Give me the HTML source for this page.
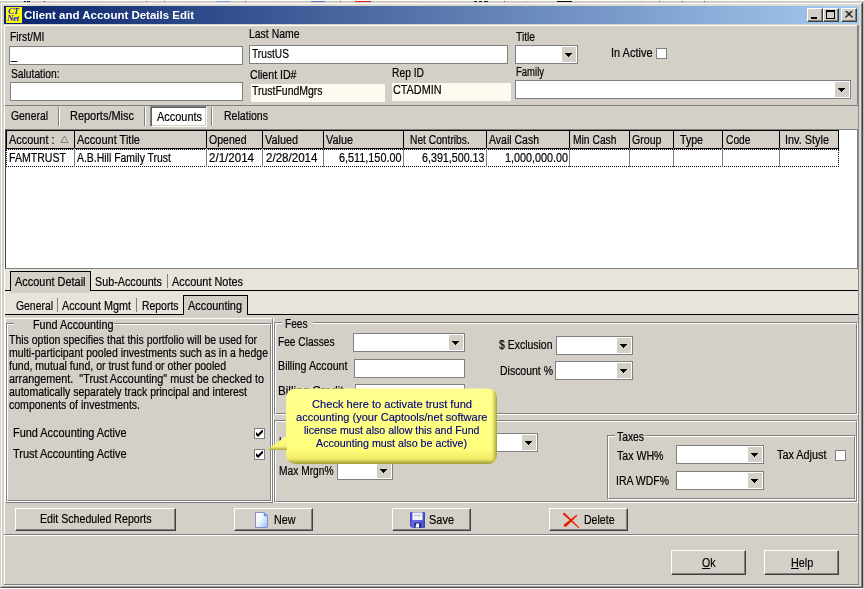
<!DOCTYPE html>
<html><head><meta charset="utf-8"><title>Client and Account Details Edit</title>
<style>
*{box-sizing:border-box;margin:0;padding:0}
html,body{width:864px;height:589px;overflow:hidden;background:#d4d0c8}
body{position:relative;font-family:"Liberation Sans",Arial,sans-serif;font-size:12.5px;color:#000;line-height:14px}
.a{position:absolute}
.t{position:absolute;white-space:nowrap;height:14px;line-height:14px;font-size:12.5px;transform-origin:0 0;-webkit-text-stroke:.2px #000}
.t u{text-decoration:underline;text-underline-offset:1px}
.tt{position:absolute;white-space:nowrap;height:14px;line-height:14px;font-size:11.5px;font-weight:bold;color:#fff;transform-origin:0 0}
.bt{position:absolute;white-space:nowrap;height:13px;line-height:13px;font-size:11px;color:#000080;transform-origin:0 0;-webkit-text-stroke:.15px #000080}
.inp{position:absolute;background:#fff;border:1px solid #808080}
.cream{position:absolute;background:#fffaf0}
.cb{position:absolute;width:14px;background:#d4d0c8;top:1px;bottom:1px;right:1px}
.cb:after{content:"";position:absolute;left:3px;top:6px;width:7px;height:4px;background:linear-gradient(#000,#000) 0 0/7px 1px no-repeat,linear-gradient(#000,#000) 1px 1px/5px 1px no-repeat,linear-gradient(#000,#000) 2px 2px/3px 1px no-repeat,linear-gradient(#000,#000) 3px 3px/1px 1px no-repeat}
.btn{position:absolute;background:#d4d0c8;border:1px solid;border-color:#fff #404040 #404040 #fff;box-shadow:inset -1px -1px 0 #808080}
.grp{position:absolute;border:1px solid;border-color:#808080 #fff #fff #808080}
.grp:before{content:"";position:absolute;left:0;top:0;right:0;bottom:0;border:1px solid;border-color:#fff #808080 #808080 #fff}
.chk{position:absolute;width:11px;height:11px;background:#fff;border:1px solid #808080}
.hl{position:absolute;height:1px}
.vl{position:absolute;width:1px}
.gh{position:absolute;top:130px;height:19px;background:#d4d0c8;border:1px solid #000}
.gc{position:absolute;top:148px;height:19px;border-left:1px solid #808080}
.lay{position:absolute;left:0;top:0;width:864px;height:589px;will-change:transform;pointer-events:none}
</style></head><body>
<!-- window frame -->
<div class="a" style="left:0;top:0;width:864px;height:1px;background:#fbfbfa"></div>
<div class="a" style="left:0;top:1px;width:864px;height:1px;background:#d0ccc4"></div>
<div class="a" style="left:0;top:588px;width:864px;height:1px;background:#fff"></div>
<div class="a" style="left:863px;top:1px;width:1px;height:587px;background:#c4c0b8"></div>
<div class="a" style="left:0;top:2px;width:863px;height:586px;border:1px solid;border-color:#d4d0c8 #404040 #505050 #d4d0c8"></div>
<div class="a" style="left:1px;top:3px;width:861px;height:584px;border:1px solid;border-color:#fff #808080 #a8a49c #fff"></div>
<div class="a" style="left:2px;top:4px;width:859px;height:2px;background:#dedad2"></div>
<div class="a" style="left:859px;top:6px;width:2px;height:580px;background:#dcd9d2"></div>
<!-- stray marks above window -->
<div class="hl" style="left:24px;top:1px;width:2px;background:#101040"></div><div class="hl" style="left:27px;top:1px;width:3px;background:#101040"></div><div class="hl" style="left:44px;top:1px;width:1px;background:#303050"></div><div class="hl" style="left:146px;top:1px;width:1px;background:#606060"></div><div class="hl" style="left:164px;top:1px;width:1px;background:#606060"></div><div class="hl" style="left:216px;top:1px;width:14px;background:#8aa8d8"></div><div class="hl" style="left:245px;top:1px;width:1px;background:#606060"></div><div class="hl" style="left:311px;top:1px;width:14px;background:#6a7ab0"></div><div class="hl" style="left:340px;top:1px;width:1px;background:#606060"></div><div class="hl" style="left:355px;top:1px;width:16px;background:#e02020"></div><div class="hl" style="left:474px;top:1px;width:3px;background:#202020"></div><div class="hl" style="left:479px;top:1px;width:3px;background:#202020"></div><div class="hl" style="left:484px;top:1px;width:4px;background:#202020"></div><div class="hl" style="left:504px;top:1px;width:1px;background:#606060"></div><div class="hl" style="left:526px;top:1px;width:1px;background:#e0a020"></div><div class="hl" style="left:557px;top:1px;width:15px;background:#101010"></div><div class="hl" style="left:641px;top:1px;width:1px;background:#e0a020"></div><div class="hl" style="left:659px;top:1px;width:1px;background:#606060"></div><div class="hl" style="left:682px;top:1px;width:1px;background:#404040"></div><div class="hl" style="left:704px;top:1px;width:1px;background:#606060"></div>
<!-- client bevel -->
<div class="vl" style="left:4px;top:25px;height:560px;background:#fff"></div>
<div class="hl" style="left:4px;top:25px;width:854px;background:#fff"></div>
<div class="vl" style="left:858px;top:25px;height:560px;background:#8c8c8c"></div>
<div class="vl" style="left:857px;top:25px;height:81px;background:#808080"></div>
<div class="hl" style="left:4px;top:584px;width:855px;background:#808080"></div>
<div class="hl" style="left:4px;top:585px;width:855px;background:#eceae6"></div>

<!-- title bar -->
<div class="a" style="left:4px;top:6px;width:855px;height:18px;background:linear-gradient(90deg,#0a246a 0%,#a6caf0 100%)"></div>
<div class="a" style="left:6px;top:7px;width:16px;height:16px;background:#ffff00;overflow:hidden;font-family:'Liberation Serif',serif;font-style:italic;font-weight:bold;color:#1a1ae0;font-size:9px;line-height:7px;letter-spacing:-0.5px"><div style="position:absolute;left:2px;top:1px">CT</div><div style="position:absolute;left:1px;top:8px">Net</div></div>
<div class="btn" style="left:807px;top:8px;width:16px;height:14px"><div class="a" style="left:3px;top:8px;width:6px;height:2px;background:#000"></div></div>
<div class="btn" style="left:823px;top:8px;width:16px;height:14px"><div class="a" style="left:2px;top:1px;width:9px;height:9px;border:1px solid #000;border-top-width:2px"></div></div>
<div class="btn" style="left:841px;top:8px;width:16px;height:14px"><svg class="a" style="left:3px;top:2px" width="8" height="7" viewBox="0 0 8 7"><path d="M0.5 0L7 6.5M1.5 0L8 6.5M7.5 0L1 6.5M6.5 0L0 6.5" stroke="#000" stroke-width="1" fill="none"/></svg></div>

<!-- top panel -->
<div class="inp" style="left:9px;top:46px;width:234px;height:19px"></div>
<div class="inp" style="left:10px;top:82px;width:233px;height:19px"></div>
<div class="inp" style="left:249px;top:45px;width:259px;height:19px"></div>
<div class="cream" style="left:251px;top:84px;width:134px;height:18px"></div>
<div class="cream" style="left:392px;top:83px;width:119px;height:18px"></div>
<div class="inp" style="left:515px;top:45px;width:63px;height:19px"><div class="cb"></div></div>
<div class="chk" style="left:656px;top:48px"></div>
<div class="inp" style="left:515px;top:80px;width:336px;height:19px"><div class="cb"></div></div>
<div class="hl" style="left:5px;top:105px;width:853px;background:#808080"></div>

<!-- tab strip 1 -->
<div class="vl" style="left:58px;top:107px;height:19px;background:#808080"></div><div class="vl" style="left:59px;top:107px;height:19px;background:#fff"></div>
<div class="vl" style="left:144px;top:107px;height:19px;background:#808080"></div><div class="vl" style="left:145px;top:107px;height:19px;background:#fff"></div>
<div class="vl" style="left:211px;top:107px;height:19px;background:#808080"></div><div class="vl" style="left:212px;top:107px;height:19px;background:#fff"></div>
<div class="a" style="left:150px;top:106px;width:57px;height:21px;background:#fff;border:1px solid;border-color:#808080 #fff #fff #808080;box-shadow:inset 1px 1px 0 #606060,inset -1px -1px 0 #d4d0c8"></div>

<!-- grid -->
<div class="a" style="left:5px;top:129px;width:853px;height:140px;background:#fff;border:1px solid;border-color:#808080 #808080 #808080 #404040"></div>
<div class="gh" style="left:6px;width:69px"></div>
<div class="gh" style="left:74px;width:133px"></div>
<div class="gh" style="left:206px;width:57px"></div>
<div class="gh" style="left:262px;width:62px"></div>
<div class="gh" style="left:323px;width:81px"></div>
<div class="gh" style="left:403px;width:84px"></div>
<div class="gh" style="left:486px;width:84px"></div>
<div class="gh" style="left:569px;width:61px"></div>
<div class="gh" style="left:629px;width:45px"></div>
<div class="gh" style="left:673px;width:50px"></div>
<div class="gh" style="left:722px;width:58px"></div>
<div class="gh" style="left:779px;width:60px"></div>
<svg class="a" style="left:60px;top:135px" width="9" height="8" viewBox="0 0 9 8"><path d="M4.5 1L1 7.5H8Z" fill="none" stroke="#808080" stroke-width="1"/></svg>
<div class="a" style="left:6px;top:149px;width:833px;height:18px;border:1px dotted #000"></div>
<div class="gc" style="left:74px"></div><div class="gc" style="left:206px"></div><div class="gc" style="left:262px"></div><div class="gc" style="left:323px"></div><div class="gc" style="left:403px"></div><div class="gc" style="left:486px"></div><div class="gc" style="left:569px"></div><div class="gc" style="left:629px"></div><div class="gc" style="left:673px"></div><div class="gc" style="left:722px"></div><div class="gc" style="left:779px"></div>

<!-- tab strip 2 -->
<div class="a" style="left:5px;top:269px;width:853px;height:21px;background:#e8e4dc"></div>
<div class="hl" style="left:5px;top:290px;width:853px;background:#000"></div>
<div class="a" style="left:10px;top:271px;width:81px;height:20px;background:#d4d0c8;border:1px solid #000;border-bottom:0"></div>
<div class="vl" style="left:167px;top:274px;height:14px;background:#808080"></div>
<!-- tab strip 3 -->
<div class="a" style="left:5px;top:291px;width:853px;height:23px;background:#e8e4dc"></div>
<div class="hl" style="left:5px;top:314px;width:853px;background:#000"></div>
<div class="a" style="left:11px;top:290px;width:79px;height:3px;background:#d4d0c8"></div>
<div class="a" style="left:183px;top:295px;width:65px;height:20px;background:#d4d0c8;border:1px solid #000;border-bottom:0"></div>
<div class="vl" style="left:57px;top:298px;height:14px;background:#808080"></div>
<div class="vl" style="left:136px;top:298px;height:14px;background:#808080"></div>

<!-- left panel -->
<div class="a" style="left:5px;top:318px;width:268px;height:185px;border:1px solid;border-color:#fff #808080 #808080 #fff"></div>
<div class="vl" style="left:273px;top:318px;height:185px;background:#fff"></div>
<div class="grp" style="left:6px;top:323px;width:266px;height:179px"></div>
<div class="a" style="left:14px;top:320px;width:100px;height:8px;background:#d4d0c8"></div>
<div class="chk" style="left:254px;top:428px"><svg class="a" style="left:1px;top:1px" width="7" height="7" viewBox="0 0 7 7"><path d="M0 2v3l2 2 5-5V-1L2 4z" fill="#000"/></svg></div>
<div class="chk" style="left:254px;top:449px"><svg class="a" style="left:1px;top:1px" width="7" height="7" viewBox="0 0 7 7"><path d="M0 2v3l2 2 5-5V-1L2 4z" fill="#000"/></svg></div>

<!-- fees group -->
<div class="grp" style="left:274px;top:322px;width:584px;height:93px"></div>
<div class="a" style="left:282px;top:319px;width:31px;height:8px;background:#d4d0c8"></div>
<div class="inp" style="left:353px;top:333px;width:112px;height:19px"><div class="cb"></div></div>
<div class="inp" style="left:354px;top:359px;width:111px;height:19px"></div>
<div class="inp" style="left:355px;top:384px;width:110px;height:19px"></div>
<div class="inp" style="left:556px;top:336px;width:77px;height:19px"><div class="cb"></div></div>
<div class="inp" style="left:555px;top:361px;width:78px;height:19px"><div class="cb"></div></div>

<!-- second group -->
<div class="grp" style="left:274px;top:420px;width:584px;height:83px"></div>
<div class="inp" style="left:337px;top:433px;width:201px;height:19px"><div class="cb"></div></div>
<div class="inp" style="left:337px;top:461px;width:56px;height:19px"><div class="cb"></div></div>
<div class="grp" style="left:607px;top:435px;width:249px;height:65px"></div>
<div class="a" style="left:615px;top:432px;width:30px;height:8px;background:#d4d0c8"></div>
<div class="inp" style="left:676px;top:445px;width:88px;height:19px"><div class="cb"></div></div>
<div class="inp" style="left:676px;top:471px;width:88px;height:19px"><div class="cb"></div></div>
<div class="chk" style="left:835px;top:450px"></div>

<!-- bottom buttons -->
<div class="btn" style="left:15px;top:508px;width:161px;height:23px"></div>
<div class="btn" style="left:234px;top:508px;width:79px;height:23px"></div>
<div class="btn" style="left:392px;top:508px;width:79px;height:23px"></div>
<div class="btn" style="left:549px;top:508px;width:79px;height:23px"></div>
<div class="hl" style="left:4px;top:534px;width:854px;background:#808080"></div>
<div class="hl" style="left:4px;top:535px;width:854px;background:#fff"></div>
<div class="btn" style="left:671px;top:550px;width:75px;height:25px"></div>
<div class="btn" style="left:764px;top:550px;width:75px;height:25px"></div>
<!-- button icons -->
<svg class="a" style="left:255px;top:512px" width="13" height="16" viewBox="0 0 13 16"><defs><linearGradient id="pg" x1="0" y1="0" x2="1" y2="1"><stop offset="0" stop-color="#fff"/><stop offset=".45" stop-color="#f0f6fe"/><stop offset="1" stop-color="#8cc0f4"/></linearGradient></defs><path d="M.5 .5H9L12.500 4V15.500H.5Z" fill="url(#pg)" stroke="#8a8cd0"/><path d="M9 .5V4H12.500Z" fill="#4a90e8" stroke="#6a9ae0" stroke-width=".6"/></svg>
<svg class="a" style="left:410px;top:512px" width="15" height="16" viewBox="0 0 15 16"><defs><linearGradient id="sg" x1="0" y1="0" x2="1" y2="0"><stop offset="0" stop-color="#3c40b8"/><stop offset=".2" stop-color="#6a70dc"/><stop offset=".8" stop-color="#5a60d0"/><stop offset="1" stop-color="#3c40b8"/></linearGradient></defs><path d="M1 0H14Q15 0 15 1V15Q15 16 14 16H2L0 14V1Q0 0 1 0Z" fill="url(#sg)"/><rect x="2.500" y=".5" width="10" height="7.500" fill="#f2f2f8"/><rect x="4" y="2.500" width="7" height="2" fill="#d0d0d8"/><rect x="4" y="10.500" width="7.500" height="5.500" fill="#2c3098"/><path d="M6.500 11.500H9V15.500H5.500Z" fill="#fff"/></svg>
<svg class="a" style="left:562px;top:512px" width="18" height="17" viewBox="0 0 18 17"><path d="M.6 1.900L2.300 .6L17.400 15.500L16.700 16.300Z" fill="#e81c00"/><path d="M14.500 2.700L15.600 3.500L4 14.800L1.700 14.600L2 12.400Z" fill="#e81c00"/></svg>
<!-- labels -->
<div class="lay">
<span class="tt" id="ttl" style="left:24px;top:8px;transform:scaleX(0.9989)">Client and Account Details Edit</span>
<span class="t" id="t0" style="left:10px;top:30px;transform:scaleX(0.8279)">First/MI</span>
<span class="t" id="t1" style="left:11px;top:48px;transform:scaleX(0.8629)">_</span>
<span class="t" id="t2" style="left:11px;top:67px;transform:scaleX(0.8209)">Salutation:</span>
<span class="t" id="t3" style="left:248.5px;top:27px;transform:scaleX(0.8354)">Last Name</span>
<span class="t" id="t4" style="left:252px;top:47px;transform:scaleX(0.8154)">TrustUS</span>
<span class="t" id="t5" style="left:249.5px;top:68px;transform:scaleX(0.8471)">Client ID#</span>
<span class="t" id="t6" style="left:252px;top:84px;transform:scaleX(0.8365)">TrustFundMgrs</span>
<span class="t" id="t7" style="left:392px;top:66px;transform:scaleX(0.8225)">Rep ID</span>
<span class="t" id="t8" style="left:392.5px;top:83px;transform:scaleX(0.8658)">CTADMIN</span>
<span class="t" id="t9" style="left:516px;top:30px;transform:scaleX(0.8205)">Title</span>
<span class="t" id="t10" style="left:610.5px;top:46px;transform:scaleX(0.8783)">In Active</span>
<span class="t" id="t11" style="left:516px;top:65px;transform:scaleX(0.7606)">Family</span>
<span class="t" id="t12" style="left:11px;top:109px;transform:scaleX(0.8318)">General</span>
<span class="t" id="t13" style="left:70px;top:109px;transform:scaleX(0.8775)">Reports/Misc</span>
<span class="t" id="t14" style="left:157px;top:110px;transform:scaleX(0.8751)">Accounts</span>
<span class="t" id="t15" style="left:223.5px;top:109px;transform:scaleX(0.8441)">Relations</span>
<span class="t" id="t16" style="left:9px;top:133px;transform:scaleX(0.8729)">Account :</span>
<span class="t" id="t17" style="left:77px;top:133px;transform:scaleX(0.8802)">Account Title</span>
<span class="t" id="t18" style="left:208.5px;top:133px;transform:scaleX(0.8430)">Opened</span>
<span class="t" id="t19" style="left:265px;top:133px;transform:scaleX(0.8684)">Valued</span>
<span class="t" id="t20" style="left:326px;top:133px;transform:scaleX(0.8697)">Value</span>
<span class="t" id="t21" style="left:409.75px;top:133px;transform:scaleX(0.8190)">Net Contribs.</span>
<span class="t" id="t22" style="left:489px;top:133px;transform:scaleX(0.8399)">Avail Cash</span>
<span class="t" id="t23" style="left:572.5px;top:133px;transform:scaleX(0.8239)">Min Cash</span>
<span class="t" id="t24" style="left:632px;top:133px;transform:scaleX(0.8489)">Group</span>
<span class="t" id="t25" style="left:680px;top:133px;transform:scaleX(0.8484)">Type</span>
<span class="t" id="t26" style="left:725.5px;top:133px;transform:scaleX(0.8197)">Code</span>
<span class="t" id="t27" style="left:785px;top:133px;transform:scaleX(0.8716)">Inv. Style</span>
<span class="t" id="t28" style="left:9px;top:151px;transform:scaleX(0.8462)">FAMTRUST</span>
<span class="t" id="t29" style="left:76.5px;top:151px;transform:scaleX(0.8354)">A.B.Hill Family Trust</span>
<span class="t" id="t30" style="left:209px;top:151px;transform:scaleX(0.9246)">2/1/2014</span>
<span class="t" id="t31" style="left:265.5px;top:151px;transform:scaleX(0.9261)">2/28/2014</span>
<span class="t" id="t32" style="left:339px;top:151px;transform:scaleX(0.8673)">6,511,150.00</span>
<span class="t" id="t33" style="left:421.5px;top:151px;transform:scaleX(0.8562)">6,391,500.13</span>
<span class="t" id="t34" style="left:504.5px;top:151px;transform:scaleX(0.8630)">1,000,000.00</span>
<span class="t" id="t35" style="left:15px;top:275px;transform:scaleX(0.8746)">Account Detail</span>
<span class="t" id="t36" style="left:95px;top:275px;transform:scaleX(0.8609)">Sub-Accounts</span>
<span class="t" id="t37" style="left:172px;top:275px;transform:scaleX(0.8733)">Account Notes</span>
<span class="t" id="t38" style="left:15.5px;top:299px;transform:scaleX(0.8318)">General</span>
<span class="t" id="t39" style="left:62px;top:299px;transform:scaleX(0.8637)">Account Mgmt</span>
<span class="t" id="t40" style="left:141.5px;top:299px;transform:scaleX(0.8337)">Reports</span>
<span class="t" id="t41" style="left:188px;top:299px;transform:scaleX(0.8729)">Accounting</span>
<span class="t" id="t42" style="left:32.5px;top:318px;transform:scaleX(0.8644)">Fund Accounting</span>
<span class="t" id="t43" style="left:9px;top:333px;transform:scaleX(0.8398)">This option specifies that this portfolio will be used for</span>
<span class="t" id="t44" style="left:9px;top:346px;transform:scaleX(0.8414)">multi-participant pooled investments such as in a hedge</span>
<span class="t" id="t45" style="left:9px;top:359px;transform:scaleX(0.8417)">fund, mutual fund, or trust fund or other pooled</span>
<span class="t" id="t46" style="left:9px;top:372px;transform:scaleX(0.8654)">arrangement.&nbsp; "Trust Accounting" must be checked to</span>
<span class="t" id="t47" style="left:9px;top:385px;transform:scaleX(0.8396)">automatically separately track principal and interest</span>
<span class="t" id="t48" style="left:9px;top:398px;transform:scaleX(0.8417)">components of investments.</span>
<span class="t" id="t49" style="left:12.5px;top:426px;transform:scaleX(0.8734)">Fund Accounting Active</span>
<span class="t" id="t50" style="left:12.5px;top:447px;transform:scaleX(0.8767)">Trust Accounting Active</span>
<span class="t" id="t51" style="left:284.5px;top:317px;transform:scaleX(0.8094)">Fees</span>
<span class="t" id="t52" style="left:277.5px;top:335px;transform:scaleX(0.8131)">Fee Classes</span>
<span class="t" id="t53" style="left:277.5px;top:359px;transform:scaleX(0.8547)">Billing Account</span>
<span class="t" id="t54" style="left:277.5px;top:384px;transform:scaleX(0.9334)">Billing Credit</span>
<span class="t" id="t55" style="left:498.5px;top:338px;transform:scaleX(0.8368)">$ Exclusion</span>
<span class="t" id="t56" style="left:499.5px;top:364px;transform:scaleX(0.8382)">Discount %</span>
<span class="t" id="t57" style="left:278.5px;top:464px;transform:scaleX(0.8172)">Max Mrgn%</span>
<span class="t" id="t58" style="left:278.5px;top:435px;transform:scaleX(0.7962)">Leverage</span>
<span class="t" id="t59" style="left:616.5px;top:430px;transform:scaleX(0.8268)">Taxes</span>
<span class="t" id="t60" style="left:616.5px;top:449px;transform:scaleX(0.8474)">Tax WH%</span>
<span class="t" id="t61" style="left:616px;top:474px;transform:scaleX(0.8386)">IRA WDF%</span>
<span class="t" id="t62" style="left:777px;top:448px;transform:scaleX(0.8687)">Tax Adjust</span>
<span class="t" id="t63" style="left:39.5px;top:512px;transform:scaleX(0.8489)">Edit Scheduled Reports</span>
<span class="t" id="t64" style="left:274px;top:513px;transform:scaleX(0.8595)">New</span>
<span class="t" id="t65" style="left:429px;top:513px;transform:scaleX(0.8772)">Save</span>
<span class="t" id="t66" style="left:583.5px;top:513px;transform:scaleX(0.8439)">Delete</span>
<span class="t" id="t67" style="left:702px;top:556px;transform:scaleX(0.8446)"><u>O</u>k</span>
<span class="t" id="t68" style="left:791px;top:556px;transform:scaleX(0.8671)"><u>H</u>elp</span>
</div>
<!-- balloon tooltip -->
<svg class="a" style="left:264px;top:384px" width="240" height="88" viewBox="0 0 240 88"><defs>
<linearGradient id="bg" x1="0" y1="0" x2="0" y2="1"><stop offset="0" stop-color="#ffff90"/><stop offset=".8" stop-color="#ffff7c"/><stop offset=".93" stop-color="#f0ec68"/><stop offset="1" stop-color="#9c9838"/></linearGradient>
<linearGradient id="br" x1="0" y1="0" x2="1" y2="0"><stop offset="0" stop-color="#c8c450" stop-opacity="0"/><stop offset=".972" stop-color="#c8c450" stop-opacity="0"/><stop offset="1" stop-color="#9c9838" stop-opacity=".95"/></linearGradient>
<linearGradient id="bq" x1="0" y1="0" x2="0" y2="1"><stop offset="0" stop-color="#ffff8a"/><stop offset=".75" stop-color="#f8f474"/><stop offset="1" stop-color="#a8a440"/></linearGradient>
</defs>
<path d="M33 4.500H223Q233 4.500 233 14.500V70Q233 80 223 80H33Q22 80 22 69V15.500Q22 4.500 33 4.500Z" fill="url(#bg)"/>
<path d="M33 4.500H223Q233 4.500 233 14.500V70Q233 80 223 80H33Q22 80 22 69V15.500Q22 4.500 33 4.500Z" fill="url(#br)"/>
<path d="M23 51.500L4 64.800L6 66H23Z" fill="url(#bq)"/>
</svg>
<div class="lay">
<span class="bt" id="b0" style="left:311.5px;top:398px;transform:scaleX(1.0103)">Check here to activate trust fund</span>
<span class="bt" id="b1" style="left:296px;top:411px;transform:scaleX(1.0038)">accounting (your Captools/net software</span>
<span class="bt" id="b2" style="left:304px;top:424px;transform:scaleX(0.9631)">license must also allow this and Fund</span>
<span class="bt" id="b3" style="left:316px;top:437px;transform:scaleX(0.9722)">Accounting must also be active)</span>
</div>
</body></html>
